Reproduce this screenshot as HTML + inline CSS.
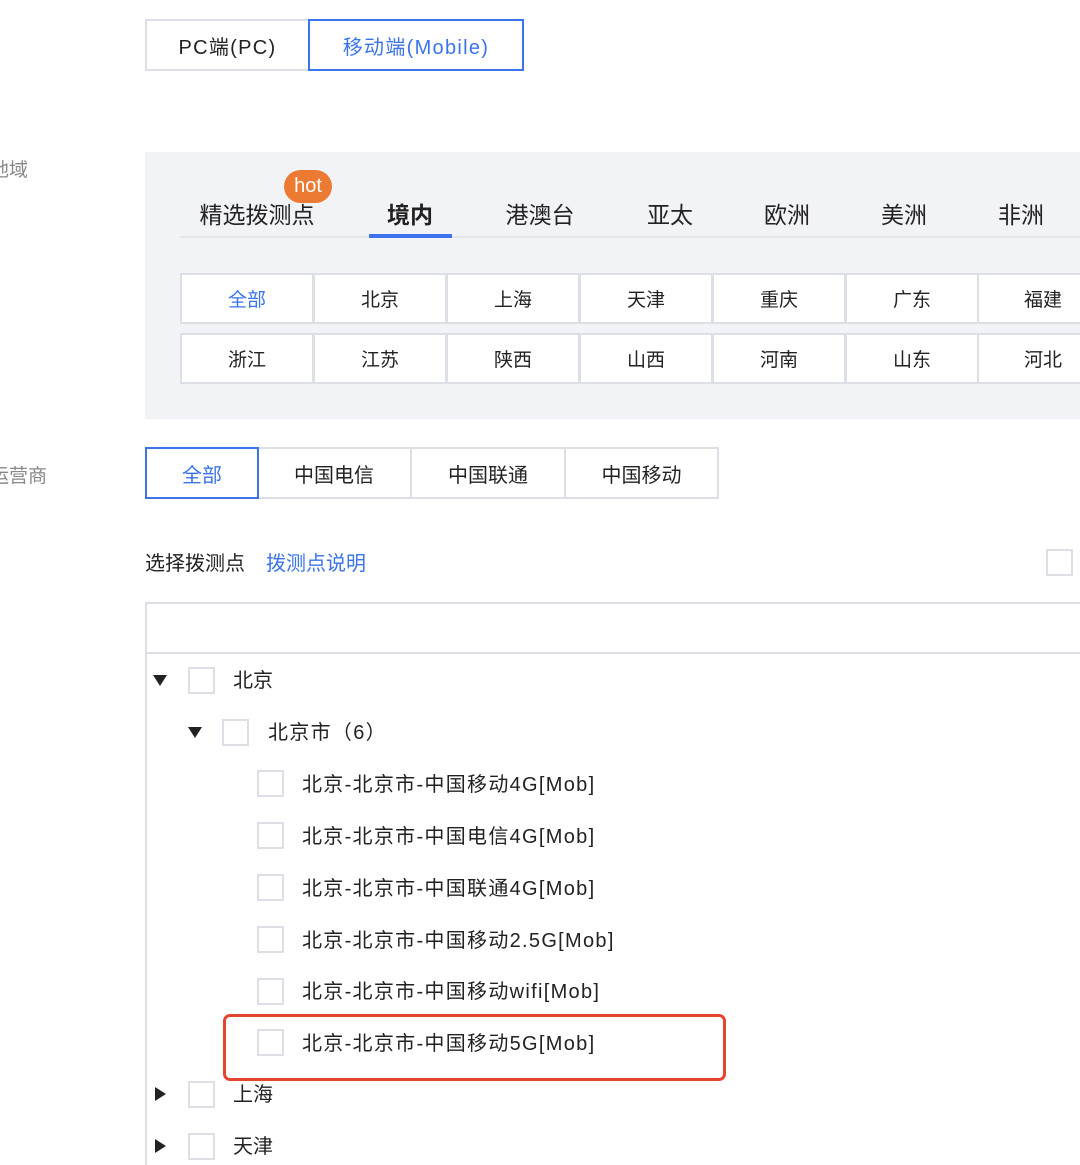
<!DOCTYPE html>
<html><head><meta charset="utf-8"><style>
*{box-sizing:border-box;margin:0;padding:0}
html,body{width:1080px;height:1165px;overflow:hidden}
body{background:#fff;position:relative;font-family:"Liberation Sans","Noto Sans CJK SC",sans-serif;color:#222}
.a{position:absolute}
.btn{position:absolute;border:2px solid #dcdfe5;background:#fff;display:flex;align-items:center;justify-content:center;font-size:20px;color:#222}
.sel{border-color:#3b73ea;color:#3b73ea;z-index:2}
.lbl{position:absolute;font-size:19px;color:#888}
.tab{position:absolute;top:196px;font-size:23px;transform:translateX(-50%);color:#222;white-space:nowrap}
.cell{position:absolute;height:51px;width:134px;border:2px solid #dcdfe5;background:#fff;display:flex;align-items:center;justify-content:center;font-size:19px}
.cb{position:absolute;width:27px;height:27px;border:2px solid #dcdfe5;background:#fff}
.t{position:absolute;font-size:20px;color:#222;white-space:nowrap;line-height:24px}
.l{letter-spacing:1.3px}
.tri{position:absolute;width:0;height:0;border-left:7px solid transparent;border-right:7px solid transparent;border-top:11px solid #222}
.trr{position:absolute;width:0;height:0;border-top:7px solid transparent;border-bottom:7px solid transparent;border-left:11px solid #222}
</style></head><body>
<div class="btn" style="left:145px;top:19px;width:165px;height:52px"><span class="l">PC端(PC)</span></div>
<div class="btn sel" style="left:308px;top:19px;width:216px;height:52px"><span class="l">移动端(Mobile)</span></div>

<div class="lbl" style="left:-10px;top:155px">地域</div>
<div class="a" style="left:145px;top:152px;width:935px;height:267px;background:#f2f3f6"></div>
<div class="a" style="left:180px;top:236px;width:900px;height:2px;background:#e3e5ea"></div>
<div class="a" style="left:369px;top:234px;width:83px;height:4px;background:#3b73ea"></div>
<div class="tab" style="left:257px">精选拨测点</div>
<div class="tab" style="left:410px;font-weight:bold">境内</div>
<div class="tab" style="left:540px">港澳台</div>
<div class="tab" style="left:670px">亚太</div>
<div class="tab" style="left:787px">欧洲</div>
<div class="tab" style="left:904px">美洲</div>
<div class="tab" style="left:1021px">非洲</div>
<div class="a" style="left:284px;top:170px;width:48px;height:33px;border-radius:17px;background:#ed7a32;color:#fff;font-size:20px;text-align:center;line-height:33px">hot</div>

<div class="cell" style="left:313px;top:273px">北京</div>
<div class="cell" style="left:446px;top:273px">上海</div>
<div class="cell" style="left:579px;top:273px">天津</div>
<div class="cell" style="left:712px;top:273px">重庆</div>
<div class="cell" style="left:845px;top:273px">广东</div>
<div class="cell" style="left:977px;top:273px;width:140px;justify-content:flex-start;padding-left:45px">福建</div>
<div class="cell sel" style="left:180px;top:273px">全部</div>
<div class="cell" style="left:180px;top:333px">浙江</div>
<div class="cell" style="left:313px;top:333px">江苏</div>
<div class="cell" style="left:446px;top:333px">陕西</div>
<div class="cell" style="left:579px;top:333px">山西</div>
<div class="cell" style="left:712px;top:333px">河南</div>
<div class="cell" style="left:845px;top:333px">山东</div>
<div class="cell" style="left:977px;top:333px;width:140px;justify-content:flex-start;padding-left:45px">河北</div>

<div class="lbl" style="left:-10px;top:461px">运营商</div>
<div class="btn" style="left:256px;top:447px;width:156px;height:52px">中国电信</div>
<div class="btn" style="left:410px;top:447px;width:156px;height:52px">中国联通</div>
<div class="btn" style="left:564px;top:447px;width:155px;height:52px">中国移动</div>
<div class="btn sel" style="left:145px;top:447px;width:114px;height:52px">全部</div>

<div class="t" style="left:145px;top:552px">选择拨测点</div>
<div class="t" style="left:266px;top:552px;color:#3b73ea">拨测点说明</div>
<div class="cb" style="left:1046px;top:549px"></div>

<div class="a" style="left:145px;top:602px;width:950px;height:600px;border:2px solid #dcdfe5"></div>
<div class="a" style="left:145px;top:652px;width:935px;height:2px;background:#dcdfe5"></div>

<div class="tri" style="left:153px;top:675px"></div>
<div class="cb" style="left:188px;top:667px"></div>
<div class="t" style="left:233px;top:669px">北京</div>
<div class="tri" style="left:188px;top:727px"></div>
<div class="cb" style="left:222px;top:719px"></div>
<div class="t l" style="left:268px;top:721px">北京市（6）</div>

<div class="cb" style="left:257px;top:770px"></div><div class="t l" style="left:302px;top:773px">北京-北京市-中国移动4G[Mob]</div>
<div class="cb" style="left:257px;top:822px"></div><div class="t l" style="left:302px;top:825px">北京-北京市-中国电信4G[Mob]</div>
<div class="cb" style="left:257px;top:874px"></div><div class="t l" style="left:302px;top:877px">北京-北京市-中国联通4G[Mob]</div>
<div class="cb" style="left:257px;top:926px"></div><div class="t l" style="left:302px;top:929px">北京-北京市-中国移动2.5G[Mob]</div>
<div class="cb" style="left:257px;top:978px"></div><div class="t l" style="left:302px;top:980px">北京-北京市-中国移动wifi[Mob]</div>
<div class="cb" style="left:257px;top:1029px"></div><div class="t l" style="left:302px;top:1032px">北京-北京市-中国移动5G[Mob]</div>
<div class="a" style="left:223px;top:1014px;width:503px;height:67px;border:3.5px solid #e5452f;border-radius:7px"></div>

<div class="trr" style="left:155px;top:1087px"></div>
<div class="cb" style="left:188px;top:1081px"></div>
<div class="t" style="left:233px;top:1083px">上海</div>
<div class="trr" style="left:155px;top:1139px"></div>
<div class="cb" style="left:188px;top:1133px"></div>
<div class="t" style="left:233px;top:1135px">天津</div>
</body></html>
